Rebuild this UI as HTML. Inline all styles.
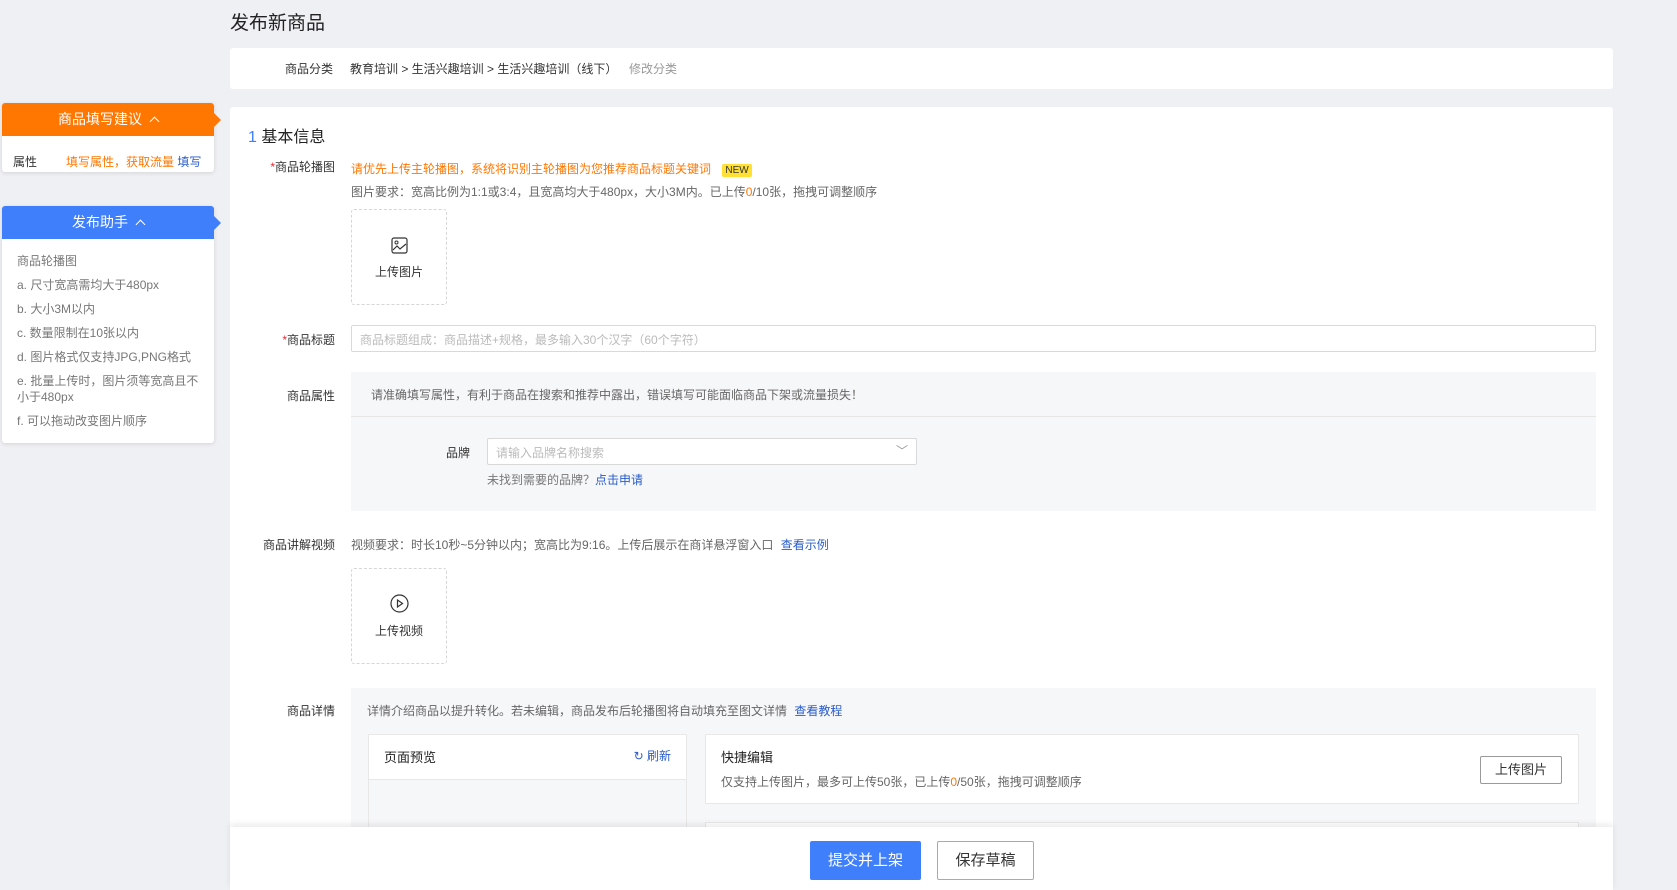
<!DOCTYPE html>
<html><head><meta charset="utf-8"><style>
*{box-sizing:border-box;margin:0;padding:0}
body{width:1677px;height:890px;overflow:hidden;background:#eff0f3;font-family:"Liberation Sans","Noto Sans CJK SC",sans-serif;font-size:12px;color:#333;position:relative}
.a{position:absolute}
.card{background:#fff;border-radius:3px}
.lbl{position:absolute;width:120px;text-align:right;right:auto}
.red{color:#f5222d}
.gray{color:#666}
.blue{color:#2a5cc9}
.upl{position:absolute;width:96px;height:96px;border:1px dashed #d6d6d6;border-radius:3px;text-align:center}
.side{position:absolute;left:2px;width:212px;background:#fff;border-radius:3px;box-shadow:0 1px 4px rgba(0,0,0,.12)}
.sh{height:33px;color:#fff;font-size:14px;text-align:center;line-height:33px;border-radius:3px 3px 0 0;position:relative}
.sh:after{content:"";position:absolute;right:-7px;top:10px;border-left:7px solid;border-top:7px solid transparent;border-bottom:7px solid transparent;border-left-color:inherit}
.chev{display:inline-block;width:7px;height:7px;border-left:1.3px solid #fff;border-top:1.3px solid #fff;transform:rotate(45deg);margin-left:9px;vertical-align:-1px}
</style></head><body>
<div class="a" style="left:230px;top:8px;font-size:19px;color:#222">发布新商品</div>

<div class="a card" style="left:230px;top:48px;width:1383px;height:41px">
 <span class="a" style="left:55px;top:12px">商品分类</span>
 <span class="a" style="left:120px;top:12px">教育培训 &gt; 生活兴趣培训 &gt; 生活兴趣培训（线下）</span>
 <span class="a" style="left:399px;top:12px;color:#999">修改分类</span>
</div>

<div class="side" style="top:103px;height:69px;border-color:#ff7700">
 <div class="sh" style="background:#ff7700;border-color:#ff7700">商品填写建议<span class="chev"></span></div>
 <span class="a" style="left:11px;top:50px">属性</span>
 <span class="a" style="left:64px;top:50px;color:#ff7700">填写属性，获取流量 <span class="blue">填写</span></span>
</div>

<div class="side" style="top:206px;height:237px">
 <div class="sh" style="background:#3f7ffc;border-color:#3f7ffc">发布助手<span class="chev"></span></div>
 <div class="a gray" style="left:15px;top:43px;width:190px;line-height:24px;font-size:12px;color:#777">
  商品轮播图<br>a. 尺寸宽高需均大于480px<br>b. 大小3M以内<br>c. 数量限制在10张以内<br>d. 图片格式仅支持JPG,PNG格式<br><div style="line-height:16px;margin:4px 0">e. 批量上传时，图片须等宽高且不小于480px</div>f. 可以拖动改变图片顺序
 </div>
</div>

<div class="a card" style="left:230px;top:107px;width:1383px;height:783px"></div>
<div class="a" style="left:248px;top:123px;font-size:16px;color:#222"><span style="color:#3f7ffc">1</span> 基本信息</div>

<div class="lbl" style="left:215px;top:158px"><span class="red">*</span>商品轮播图</div>
<div class="a" style="left:351px;top:160px;color:#ff7700">请优先上传主轮播图，系统将识别主轮播图为您推荐商品标题关键词 <span style="background:#ffe033;color:#333;font-size:10px;padding:1px 3px;border-radius:2px;margin-left:8px">NEW</span></div>
<div class="a gray" style="left:351px;top:183px">图片要求：宽高比例为1:1或3:4，且宽高均大于480px，大小3M内。已上传<span style="color:#ff7700">0</span>/10张，拖拽可调整顺序</div>
<div class="upl" style="left:351px;top:209px">
 <svg class="a" style="left:39px;top:27px" width="17" height="17" viewBox="0 0 17 17"><rect x="1" y="1" width="15" height="15" rx="2" fill="none" stroke="#333" stroke-width="1.2"/><circle cx="5.5" cy="5.5" r="1.5" fill="none" stroke="#333"/><path d="M2 13l4-4 3 3 6-5" fill="none" stroke="#333" stroke-width="1.2"/></svg>
 <div class="a" style="left:0;width:100%;top:53px">上传图片</div>
</div>

<div class="lbl" style="left:215px;top:331px"><span class="red">*</span>商品标题</div>
<div class="a" style="left:351px;top:325px;width:1245px;height:27px;border:1px solid #d9d9d9;border-radius:2px;padding:5px 8px;color:#bbb">商品标题组成：商品描述+规格，最多输入30个汉字（60个字符）</div>

<div class="lbl" style="left:215px;top:387px">商品属性</div>
<div class="a" style="left:351px;top:372px;width:1245px;height:139px;background:#f6f7f9">
 <div class="a gray" style="left:20px;top:14px">请准确填写属性，有利于商品在搜索和推荐中露出，错误填写可能面临商品下架或流量损失！</div>
 <div class="a" style="left:0;top:44px;width:100%;height:1px;background:#e6e6e6"></div>
 <div class="a" style="left:95px;top:72px">品牌</div>
 <div class="a" style="left:136px;top:66px;width:430px;height:27px;background:#fff;border:1px solid #d9d9d9;border-radius:2px;padding:5px 8px;color:#bbb">请输入品牌名称搜索<span class="a" style="right:8px;top:3px;color:#999">﹀</span></div>
 <div class="a" style="left:136px;top:99px;color:#777">未找到需要的品牌？<span class="blue">点击申请</span></div>
</div>

<div class="lbl" style="left:215px;top:536px">商品讲解视频</div>
<div class="a gray" style="left:351px;top:536px">视频要求：时长10秒~5分钟以内；宽高比为9:16。上传后展示在商详悬浮窗入口 <span class="blue" style="margin-left:4px">查看示例</span></div>
<div class="upl" style="left:351px;top:568px">
 <svg class="a" style="left:38px;top:25px" width="19" height="19" viewBox="0 0 19 19"><circle cx="9.5" cy="9.5" r="8.5" fill="none" stroke="#333" stroke-width="1.2"/><path d="M7.5 6v7l5-3.5z" fill="none" stroke="#333" stroke-width="1.2"/></svg>
 <div class="a" style="left:0;width:100%;top:53px">上传视频</div>
</div>

<div class="lbl" style="left:215px;top:702px">商品详情</div>
<div class="a" style="left:351px;top:688px;width:1245px;height:140px;background:#f6f7f9">
 <div class="a gray" style="left:16px;top:14px">详情介绍商品以提升转化。若未编辑，商品发布后轮播图将自动填充至图文详情 <span class="blue" style="margin-left:4px">查看教程</span></div>
 <div class="a" style="left:17px;top:46px;width:319px;height:100px;background:#f6f7f9;border:1px solid #e8e8e8">
  <div style="height:45px;background:#fff;border-bottom:1px solid #e8e8e8;position:relative">
   <span class="a" style="left:15px;top:12px;font-size:13px;color:#222">页面预览</span>
   <span class="a blue" style="right:15px;top:12px">↻ 刷新</span>
  </div>
 </div>
 <div class="a" style="left:354px;top:46px;width:874px;height:70px;background:#fff;border:1px solid #e8e8e8">
  <span class="a" style="left:15px;top:12px;font-size:13px;color:#222">快捷编辑</span>
  <span class="a gray" style="left:15px;top:38px">仅支持上传图片，最多可上传50张，已上传<span style="color:#ff7700">0</span>/50张，拖拽可调整顺序</span>
  <div class="a" style="right:16px;top:21px;width:82px;height:28px;border:1px solid #999;border-radius:2px;text-align:center;line-height:26px;font-size:13px">上传图片</div>
 </div>
 <div class="a" style="left:354px;top:134px;width:874px;height:20px;background:#fff;border:1px solid #e8e8e8"></div>
</div>

<div class="a" style="left:230px;top:827px;width:1383px;height:63px;background:#fff;box-shadow:0 -3px 6px rgba(0,0,0,.08)">
 <div class="a" style="left:580px;top:14px;width:111px;height:39px;background:#3f7ffc;color:#fff;border-radius:2px;text-align:center;line-height:39px;font-size:15px">提交并上架</div>
 <div class="a" style="left:707px;top:14px;width:97px;height:39px;border:1px solid #aaa;border-radius:2px;text-align:center;line-height:37px;font-size:15px">保存草稿</div>
</div>
</body></html>
